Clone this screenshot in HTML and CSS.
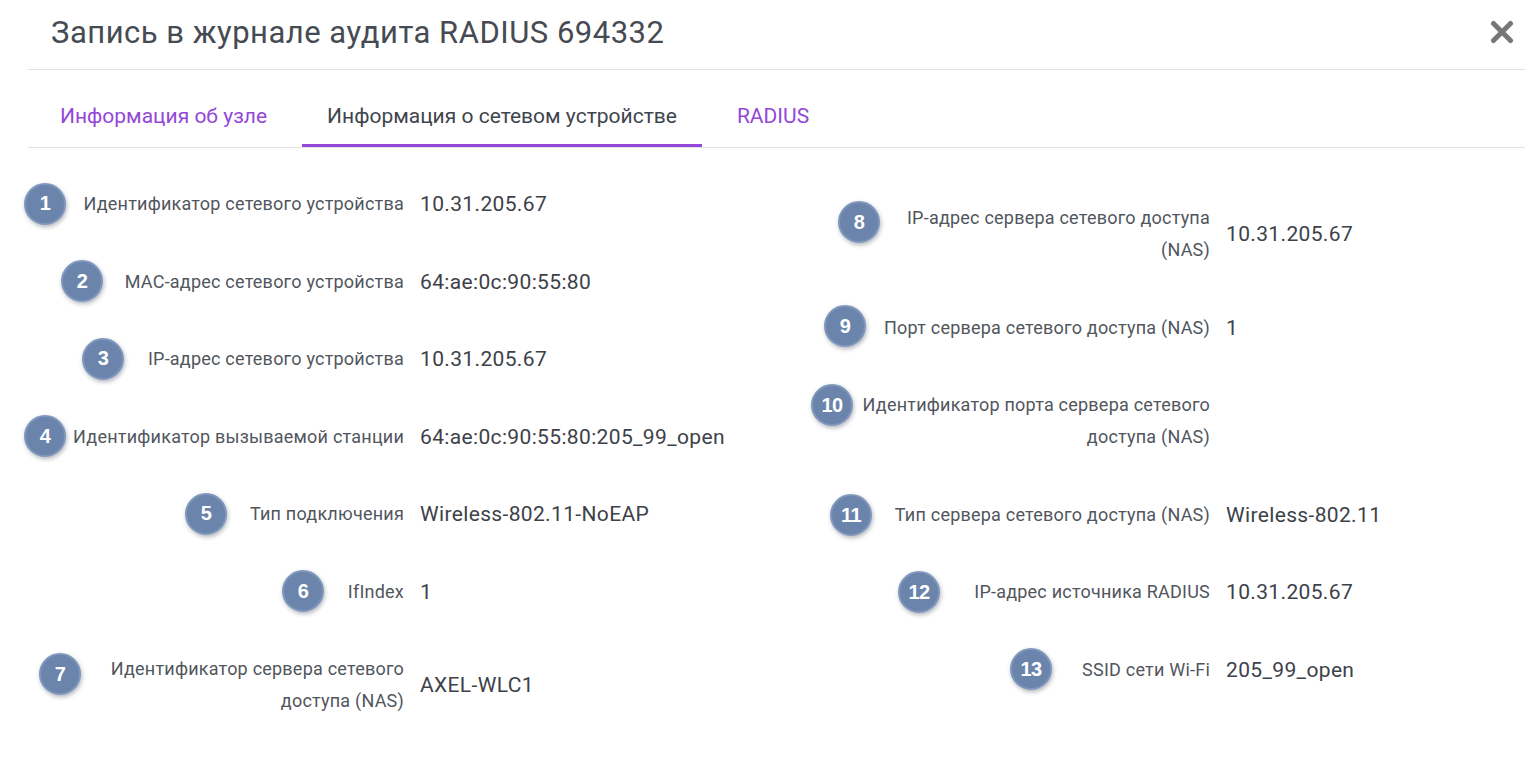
FILE: index.html
```html
<!DOCTYPE html>
<html lang="ru">
<head>
<meta charset="utf-8">
<title>Запись в журнале аудита RADIUS 694332</title>
<link rel="stylesheet" href="styles.css">
</head>
<body>
<div class="dialog">
  <header class="dialog-header">
    <h1 class="title">Запись в журнале аудита RADIUS 694332</h1>
    <button class="close" aria-label="Закрыть">
      <svg width="24" height="24" viewBox="0 0 24 24"><path d="M3.5 3.5 L20.5 20.5 M20.5 3.5 L3.5 20.5" stroke="#777" stroke-width="5" stroke-linecap="round" fill="none"/></svg>
    </button>
  </header>
  <nav class="tabs">
    <a class="tab">Информация об узле</a>
    <a class="tab tab--active">Информация о сетевом устройстве</a>
    <a class="tab">RADIUS</a>
  </nav>
  <div class="content">
    <div class="col col--left">
      <div class="row"><span class="badge b1">1</span><div class="label">Идентификатор сетевого устройства</div><div class="value">10.31.205.67</div></div>
      <div class="row"><span class="badge b2">2</span><div class="label">MAC-адрес сетевого устройства</div><div class="value">64:ae:0c:90:55:80</div></div>
      <div class="row"><span class="badge b3">3</span><div class="label">IP-адрес сетевого устройства</div><div class="value">10.31.205.67</div></div>
      <div class="row"><span class="badge b4">4</span><div class="label">Идентификатор вызываемой станции</div><div class="value">64:ae:0c:90:55:80:205_99_open</div></div>
      <div class="row"><span class="badge b5">5</span><div class="label">Тип подключения</div><div class="value">Wireless-802.11-NoEAP</div></div>
      <div class="row"><span class="badge b6">6</span><div class="label">IfIndex</div><div class="value">1</div></div>
      <div class="row"><span class="badge b7">7</span><div class="label">Идентификатор сервера сетевого доступа (NAS)</div><div class="value">AXEL-WLC1</div></div>
    </div>
    <div class="col col--right">
      <div class="row"><span class="badge b8">8</span><div class="label">IP-адрес сервера сетевого доступа (NAS)</div><div class="value">10.31.205.67</div></div>
      <div class="row"><span class="badge b9">9</span><div class="label">Порт сервера сетевого доступа (NAS)</div><div class="value">1</div></div>
      <div class="row"><span class="badge b10">10</span><div class="label">Идентификатор порта сервера сетевого доступа (NAS)</div><div class="value"></div></div>
      <div class="row"><span class="badge b11">11</span><div class="label">Тип сервера сетевого доступа (NAS)</div><div class="value">Wireless-802.11</div></div>
      <div class="row"><span class="badge b12">12</span><div class="label">IP-адрес источника RADIUS</div><div class="value">10.31.205.67</div></div>
      <div class="row"><span class="badge b13">13</span><div class="label">SSID сети Wi-Fi</div><div class="value">205_99_open</div></div>
    </div>
  </div>
</div>
</body>
</html>
```
FILE: styles.css
```css
* { box-sizing: border-box; }
html, body { margin: 0; padding: 0; background: #fff; }
body { font-family: Roboto, "Noto Sans", sans-serif; color: #454a52; width: 1525px; height: 766px; overflow: hidden; }

.dialog { margin-left: 28px; }

.dialog-header {
  height: 70px;
  display: flex;
  align-items: center;
  justify-content: space-between;
  border-bottom: 1px solid #e2e2e2;
  padding: 0 10px 0 23px;
}
.title {
  margin: 0;
  font-size: 31px;
  letter-spacing: 0.5px;
  font-weight: 400;
  color: #464b53;
  line-height: 36px;
  padding-bottom: 4px;
}
.close {
  border: 0;
  background: none;
  padding: 0;
  width: 26px;
  height: 26px;
  display: flex;
  align-items: center;
  justify-content: center;
  margin-bottom: 5px;
}

.tabs {
  display: flex;
  gap: 10px;
  padding-left: 7px;
  border-bottom: 1px solid #e2e2e2;
  height: 78px;
}
.tab {
  height: 77px;
  padding: 34px 25px 0;
  font-size: 21px;
  line-height: 24px;
  color: #9447d9;
  border-bottom: 3px solid transparent;
  cursor: pointer;
}
.tab--active {
  color: #40454d;
  border-bottom-color: #9447d9;
}

.content {
  display: grid;
  grid-template-columns: 806px 1fr;
  padding-top: 40px;
}
.col {
  display: flex;
  flex-direction: column;
  row-gap: 45.5px;
}
.col--right { padding-top: 14px; }

.row {
  position: relative;
  display: grid;
  grid-template-columns: 376px 1fr;
  column-gap: 16px;
  align-items: center;
}
.label {
  justify-self: end;
  max-width: 352px;
  text-align: right;
  font-size: 18px;
  letter-spacing: 0.22px;
  line-height: 32px;
  color: #51565d;
}
.value {
  font-size: 21px;
  letter-spacing: 0.35px;
  line-height: 32px;
  color: #3d4148;
}

.badge {
  position: absolute;
  top: -5.5px;
  width: 42px;
  height: 42px;
  border-radius: 50%;
  background: #6b84ac;
  border: 2px solid #7f97bd;
  box-shadow: 1px 2px 4px rgba(40, 50, 70, 0.35);
  color: #fff;
  font-family: "Liberation Sans", Arial, sans-serif;
  font-weight: 700;
  font-size: 20px;
  display: flex;
  align-items: center;
  justify-content: center;
  letter-spacing: -0.5px;
}
.b1 { left: -4px; }
.b2 { left: 33px; }
.b3 { left: 54px; }
.b4 { left: -4px; }
.b5 { left: 157px; }
.b6 { left: 254px; }
.b7 { left: 11px; top: 0; }
.b8 { left: 4px; top: -1px; }
.b9 { left: -10px; top: -6.5px; }
.b10 { left: -23px; top: -5px; }
.b11 { left: -4px; top: -4.5px; }
.b12 { left: 64px; top: -5px; }
.b13 { left: 176px; top: -5.5px; }
```
